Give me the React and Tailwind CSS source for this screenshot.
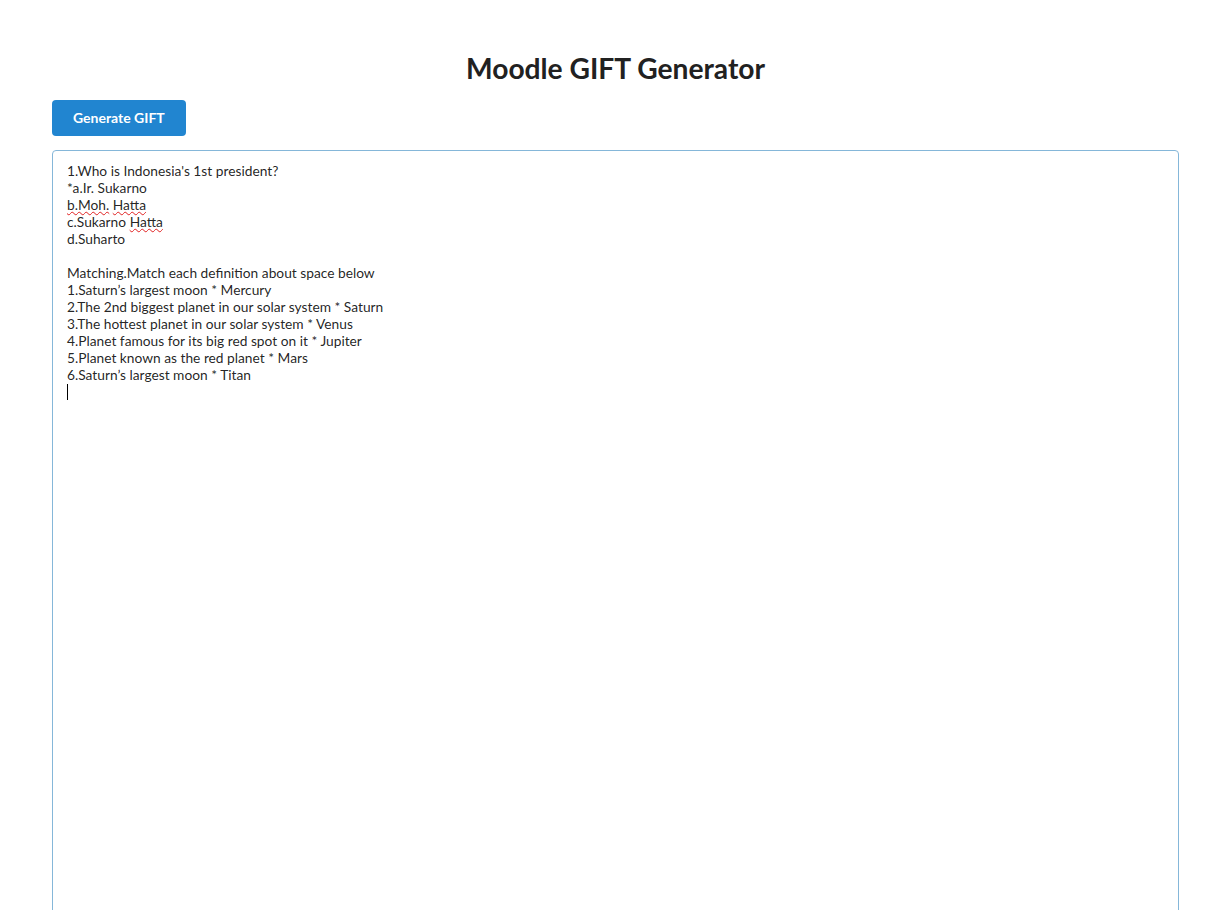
import React from "react";

const lines1 = [
  ["1.Who is Indonesia's 1st president?"],
  ["*a.Ir. Sukarno"],
  [{ u: "b.Moh." }, " ", { u: "Hatta" }],
  ["c.Sukarno ", { u: "Hatta" }],
  ["d.Suharto"],
];

const lines2 = [
  "Matching.Match each definition about space below",
  "1.Saturn\u2019s largest moon * Mercury",
  "2.The 2nd biggest planet in our solar system * Saturn",
  "3.The hottest planet in our solar system * Venus",
  "4.Planet famous for its big red spot on it * Jupiter",
  "5.Planet known as the red planet * Mars",
  "6.Saturn\u2019s largest moon * Titan",
];

export default function App() {
  return (
    <div
      className="min-h-screen bg-white pl-[52px] pr-[50px]"
      style={{ fontFamily: "Lato, 'Liberation Sans', sans-serif" }}
    >
      <h1 className="pt-[50px] text-center text-[28.2px] font-bold leading-[36px] text-[#212121]">
        Moodle GIFT Generator
      </h1>
      <button className="mt-[14px] h-[36px] rounded-[4px] bg-[#2185d0] px-[21px] text-[14px] font-bold leading-[14px] text-white">
        Generate GIFT
      </button>
      <div className="mt-[14px] h-[900px] rounded-[4px] border border-[#85b7d9] px-[14px] pt-[11px] text-[13.75px] leading-[17px] text-[rgba(0,0,0,0.87)]">
        {lines1.map((parts, i) => (
          <div key={i}>
            {parts.map((p, j) =>
              typeof p === "string" ? (
                <span key={j}>{p}</span>
              ) : (
                <span
                  key={j}
                  className="underline decoration-wavy decoration-[#e02020] decoration-1 underline-offset-1"
                >
                  {p.u}
                </span>
              )
            )}
          </div>
        ))}
        <div className="h-[17px]" />
        {lines2.map((l, i) => (
          <div key={i}>{l}</div>
        ))}
        <div className="flex h-[17px] items-center">
          <span className="inline-block h-[16px] w-px bg-black" />
        </div>
      </div>
    </div>
  );
}
